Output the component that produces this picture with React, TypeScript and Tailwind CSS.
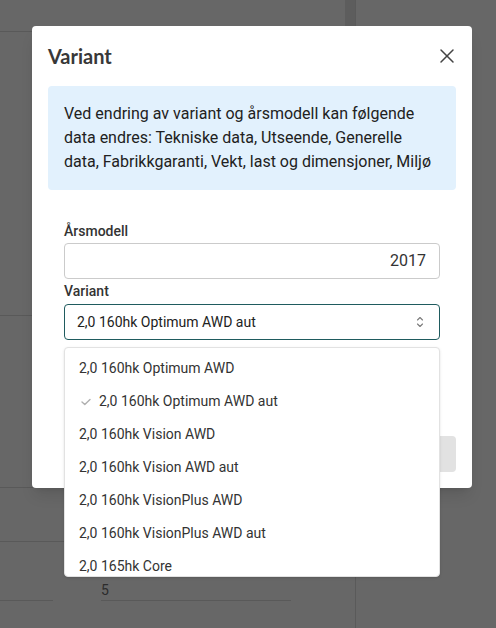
import { X } from 'lucide-react'

const variants = [
  '2,0 160hk Optimum AWD',
  '2,0 160hk Optimum AWD aut',
  '2,0 160hk Vision AWD',
  '2,0 160hk Vision AWD aut',
  '2,0 160hk VisionPlus AWD',
  '2,0 160hk VisionPlus AWD aut',
  '2,0 165hk Core',
]

const selected = '2,0 160hk Optimum AWD aut'

function PageBehind() {
  return (
    <div className="flex h-full">
      <div className="flex w-[356px] border-r border-[#5a5a5a]">
        <div className="flex w-[345px] flex-col">
          <div className="h-[32px] border-b border-[#595959]" />
          <div className="h-[284px] border-b border-[#595959]" />
          <div className="h-[172px] border-b border-[#595959]" />
          <div className="h-[54px] border-b border-[#595959]" />
          <div className="flex items-end pt-[39px]">
            <div className="h-[20px] w-[53px] border-b border-[#595959]" />
            <div className="ml-[48px] w-[190px] border-b border-[#595959] pb-[1px] text-[14px] leading-[18px] text-[#2c2c2c]">
              5
            </div>
          </div>
        </div>
        <div className="w-[10px]">
          <div className="h-[26px] bg-[#5d5d5d]" />
        </div>
      </div>
    </div>
  )
}

function Chevrons() {
  return (
    <svg width="8" height="12" viewBox="0 0 8 12" fill="none" stroke="#7a7a7a" strokeWidth="1.1" strokeLinecap="round" strokeLinejoin="round">
      <path d="M1.5 4 L4 1.5 L6.5 4" />
      <path d="M1.5 8 L4 10.5 L6.5 8" />
    </svg>
  )
}

function Check() {
  return (
    <svg width="10" height="8" viewBox="0 0 10 8" fill="none" stroke="#b0b0b0" strokeWidth="1.4" strokeLinecap="round" strokeLinejoin="round">
      <path d="M1 4 L3.8 6.6 L9 1.4" />
    </svg>
  )
}

export default function App() {
  return (
    <div className="relative h-[628px] w-[496px] overflow-hidden bg-[#676767] font-['Roboto',sans-serif]">
      <PageBehind />

      {/* Dialog */}
      <div className="absolute left-[32px] top-[26px] flex h-[462px] w-[440px] flex-col rounded-[4px] bg-white shadow-lg">
        <div className="flex items-center justify-between pl-4 pr-[13px] pt-4">
          <h2 className="font-['Lato',sans-serif] text-[20px] font-bold leading-[28px] text-[#383838]">Variant</h2>
          <X size={24} strokeWidth={1.5} className="text-[#444]" />
        </div>

        <div className="mx-4 mt-4 rounded-[4px] bg-[#e2f1fd] px-4 py-4 text-[16px] leading-[24px] text-[#212121]">
          Ved endring av variant og årsmodell kan følgende data endres: Tekniske data, Utseende, Generelle data, Fabrikkgaranti, Vekt, last og dimensjoner, Miljø
        </div>

        <div className="mt-[31px] px-8">
          <label className="block text-[14px] font-medium leading-[20px] text-[#333]">Årsmodell</label>
          <div className="mt-[2px] flex h-9 items-center justify-end rounded-[4px] border border-[#cbcbcb] pr-[13px] text-[16px] text-[#333]">
            2017
          </div>

          <label className="mt-[2px] block text-[14px] font-medium leading-[20px] text-[#333]">Variant</label>
          <div className="relative mt-[3px]">
            <div className="flex h-9 items-center justify-between rounded-[4px] border border-[#1f5b5e] pl-[12px] pr-[15px] text-[14px] text-[#222]">
              <span>{selected}</span>
              <Chevrons />
            </div>

            {/* Dropdown */}
            <div className="absolute left-0 top-[43px] z-10 h-[230px] w-full overflow-hidden rounded-[4px] border border-[#e2e2e2] bg-white pt-[4px] shadow-sm">
              {variants.map((v) => (
                <div key={v} className="flex h-[33px] items-center text-[14px] text-[#333]">
                  {v === selected ? (
                    <>
                      <span className="ml-[16px] mr-[8px] flex w-[10px]">
                        <Check />
                      </span>
                      {v}
                    </>
                  ) : (
                    <span className="pl-[14px]">{v}</span>
                  )}
                </div>
              ))}
            </div>
          </div>
        </div>

        <div className="mt-auto flex justify-end px-4 pb-4">
          <div className="h-9 w-[110px] rounded-[4px] bg-[#e2e2e2]" />
        </div>
      </div>
    </div>
  )
}
